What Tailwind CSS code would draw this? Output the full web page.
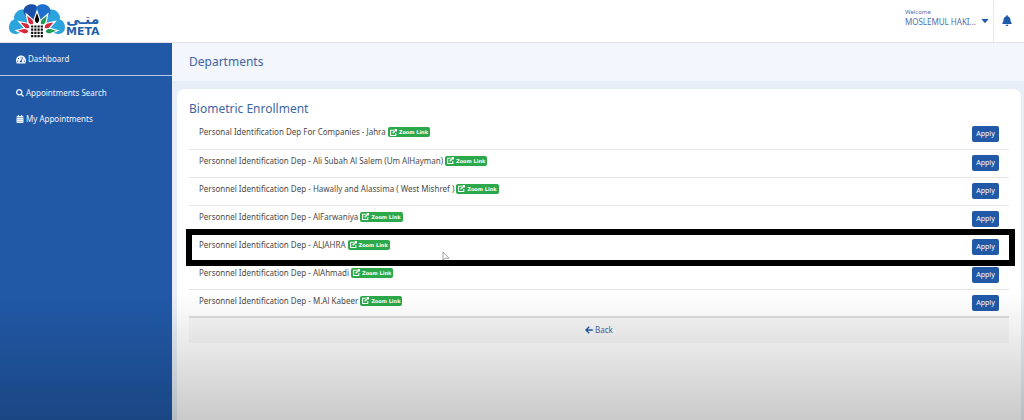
<!DOCTYPE html>
<html lang="en">
<head>
  <meta charset="UTF-8">
  <meta name="viewport" content="width=device-width, initial-scale=1">
  <title>META - Departments</title>
  <!-- Tailwind CSS CDN -->
  <script src="https://cdn.jsdelivr.net/npm/@tailwindcss/browser@4"></script>
</head>
<body class="relative min-h-screen flex flex-col bg-[#e7eef8] font-['Noto_Sans','Open_Sans',sans-serif] text-[8px] leading-3 text-[#4a4a4a]">

  <!-- Shared shapes -->
  <svg class="hidden" aria-hidden="true">
    <symbol id="icon-edit" viewBox="0 0 512 512"><path fill="none" stroke="currentColor" stroke-width="76" d="M280 90H45v380h380V290"/><path fill="currentColor" d="M300 0h212v212l-70-70-210 210-75-75L367 67z"/></symbol>
    <symbol id="petal" viewBox="-8 -30 16 20" overflow="visible"><path fill="currentColor" d="M0-11.500C-3-14-7.200-17-7.400-22-7.300-26.500-4-28.500 0-28.500S7.300-26.500 7.400-22C7.200-17 3-14 0-11.500z"/></symbol>
    <symbol id="drop" viewBox="-4 -20 8 14" overflow="visible"><path fill="currentColor" stroke="#fff" stroke-width="1.200" d="M0-21L2.900-12.500Q2.600-9 0-8-2.600-9-2.900-12.500z"/></symbol>
  </svg>

  <header class="flex h-[43px] shrink-0 items-center border-b border-[#dde2e9] bg-white">
    <a href="#" class="ml-2 flex items-center text-[#1f5fae]" aria-label="META home">
      <svg class="w-[58px] h-9" viewBox="-29 -29 58 36" aria-hidden="true">
        <g class="text-[#2ba3dc]">
          <use href="#petal" x="-8" y="-30" width="16" height="20" transform="rotate(-76)"/>
          <use href="#petal" x="-8" y="-30" width="16" height="20" transform="rotate(-46)"/>
          <use href="#petal" x="-8" y="-30" width="16" height="20" transform="rotate(46)"/>
          <use href="#petal" x="-8" y="-30" width="16" height="20" transform="rotate(76)"/>
        </g>
        <use href="#petal" x="-8" y="-30" width="16" height="20" transform="rotate(-16)" class="text-[#1c4fa8]"/>
        <use href="#petal" x="-8" y="-30" width="16" height="20" transform="rotate(16)" class="text-[#1d6fcb]"/>
        <g class="text-[#d5283c]">
          <use href="#drop" x="-4" y="-20" width="8" height="14" transform="rotate(-86)"/>
          <use href="#drop" x="-4" y="-20" width="8" height="14" transform="rotate(-60)"/>
          <use href="#drop" x="-4" y="-20" width="8" height="14" transform="rotate(-31)"/>
          <use href="#drop" x="-4" y="-20" width="8" height="14" transform="rotate(60)"/>
        </g>
        <g class="text-[#1d9a57]">
          <use href="#drop" x="-4" y="-20" width="8" height="14" transform="rotate(31)"/>
          <use href="#drop" x="-4" y="-20" width="8" height="14" transform="rotate(86)"/>
        </g>
        <use href="#drop" x="-4" y="-20" width="8" height="14" class="text-black"/>
        <path fill="#fff" d="M-6.500-7.500h13V6h-13z"/>
        <path fill="none" stroke="#111" stroke-width="2.200" stroke-dasharray="2.200 1" d="M-5.900-5.500H6.100M-5.900-2.300H6.100M-5.900.9H6.100M-5.900 4.100H6.100"/>
      </svg>
      <span class="flex flex-col pt-2 font-['DejaVu_Sans',sans-serif] font-bold">
        <span lang="ar" dir="rtl" class="text-center text-[14px] leading-[14px]">متـى</span>
        <span class="text-[11px] leading-3">META</span>
      </span>
    </a>
    <div class="ml-auto flex h-full items-center">
      <button type="button" class="flex items-center gap-[5px] pr-1 pb-1.5 text-left text-[#4a6fae]">
        <span><span class="block text-[6px] leading-2">Welcome</span><span class="block">MOSLEMUL HAKI...</span></span>
        <svg class="mt-1.5 h-2 w-2" viewBox="0 0 8 8" aria-hidden="true"><path fill="#1f5aa8" d="M1 2h6q.6 0 .2.500L4.400 5.700q-.4.400-.8 0L.8 2.500Q.4 2 1 2z"/></svg>
      </button>
      <button type="button" class="flex h-full w-[31px] items-center justify-center border-l border-[#e6e9ee] pr-1 pb-0.5 text-[#1f5aa8]" aria-label="Notifications">
        <svg class="h-[11px] w-[10px]" viewBox="0 0 448 512" aria-hidden="true"><path fill="currentColor" d="M224 512c35.300 0 63.900-28.700 63.900-64H160.100c0 35.300 28.600 64 63.900 64zm215.400-149.700c-19.300-20.800-55.500-52-55.500-154.300 0-77.700-54.500-139.900-127.900-155.200V32c0-17.700-14.300-32-32-32s-32 14.300-32 32v20.800C118.600 68.100 64.100 130.300 64.100 208c0 102.300-36.200 133.500-55.500 154.300-6 6.400-8.700 14.100-8.600 21.700.1 16.400 13 32 32.100 32h383.800c19.100 0 32-15.600 32.100-32 .1-7.600-2.600-15.300-8.600-21.700z"/></svg>
      </button>
    </div>
  </header>

  <div class="flex grow">
    <nav class="w-[172px] shrink-0 bg-[#2159a7] text-[#f0f5fc]">
      <a href="#" class="flex h-[33px] items-center gap-[2px] border-b border-[#b5cbea] pl-4">
        <svg class="h-[9px] w-[10px]" viewBox="0 0 576 512" aria-hidden="true"><path fill="currentColor" fill-rule="evenodd" d="M288 32C129 32 0 161 0 320c0 53 14 102 39 145 6 9 16 15 27 15h444c11 0 21-6 27-15 25-43 39-92 39-145C576 161 447 32 288 32zm0 64a32 32 0 1 1 0 64 32 32 0 1 1 0-64zM96 384a32 32 0 1 1 0-64 32 32 0 1 1 0 64zm48-160a32 32 0 1 1 0-64 32 32 0 1 1 0 64zm202 192H230c-4-10-6-20-6-32 0-34 26-62 60-64l66-170c5-12 18-19 31-14 12 5 19 18 14 31l-66 170c15 12 23 29 23 47 0 12-2 22-6 32zm134-32a32 32 0 1 1 0-64 32 32 0 1 1 0 64z"/></svg>
        Dashboard
      </a>
      <a href="#" class="mt-1 flex h-[26px] items-center gap-[2px] pl-4">
        <svg class="h-2 w-2" viewBox="0 0 512 512" aria-hidden="true"><path fill="none" stroke="currentColor" stroke-width="84" d="M208 42a166 166 0 1 0 0 332 166 166 0 1 0 0-332zM325 325L480 480"/></svg>
        Appointments Search
      </a>
      <a href="#" class="flex h-[26px] items-center gap-[2px] pl-4">
        <svg class="h-2 w-2" viewBox="0 0 448 512" aria-hidden="true"><path fill="currentColor" fill-rule="evenodd" d="M0 464c0 26 22 48 48 48h352c26 0 48-22 48-48V192H0zM72 268h48v48H72zm128 0h48v48h-48zm128 0h48v48h-48zM72 396h48v48H72zm128 0h48v48h-48zm128 0h48v48h-48zM400 64h-48V0h-64v64H160V0H96v64H48C22 64 0 86 0 112v48h448v-48c0-26-22-48-48-48z"/></svg>
        My Appointments
      </a>
    </nav>

    <main class="flex grow flex-col">
      <h1 class="bg-[#f3f6fc] px-[17px] py-2 text-[12px] leading-[22px] text-[#3f65a3]">Departments</h1>

      <section class="mt-2 mr-[3px] ml-[5px] grow rounded-t-lg bg-white px-3 pt-3">
        <h2 class="text-[12px] leading-4 text-[#3f65a3]">Biometric Enrollment</h2>

        <table class="mt-1 w-full">
          <tbody id="departments"></tbody>
          <tfoot>
            <tr class="border-t-2 border-[#dedcde] bg-black/3">
              <td colspan="2" class="h-[26px] text-center">
                <a href="#" class="inline-flex items-center gap-[2px] text-[#3f65a3]">
                  <svg class="h-2 w-2" viewBox="0 0 8 8" aria-hidden="true"><path fill="none" stroke="#2159a7" stroke-width="1.400" d="M4.200.8L1 4l3.200 3.200M1 4h6.800"/></svg>
                  Back
                </a>
              </td>
            </tr>
          </tfoot>
        </table>
      </section>
    </main>
  </div>

  <!-- Bottom shade -->
  <div class="pointer-events-none absolute inset-x-0 bottom-0 h-32 bg-linear-to-b from-transparent to-black/21"></div>

  <!-- Row template -->
  <template id="row-template">
    <tr class="relative h-7 border-b border-[#e6e6e8] align-top last:border-b-0">
      <td class="pt-[5px] pl-[10px]">
        <div class="flex items-center gap-[2px]">
          <span class="name"></span>
          <a href="#" class="flex h-[10px] items-center gap-[2px] rounded-xs bg-[#2ba84a] px-[2px] font-['DejaVu_Sans',sans-serif] text-[5px] font-bold text-white">
            <svg class="h-[7px] w-[7px]" aria-hidden="true"><use href="#icon-edit"/></svg>
            Zoom Link
          </a>
        </div>
      </td>
      <td class="w-[37px] pt-[5px] pr-[10px]">
        <button type="button" class="block h-4 w-[27px] rounded-xs bg-[#2159a7] text-[7px] text-white hover:bg-[#1a4a8d]">Apply</button>
      </td>
    </tr>
  </template>

  <!-- Frame and pointer drawn over the selected row -->
  <template id="highlight-template">
    <div class="pointer-events-none absolute -top-1 -right-1.5 -bottom-1.5 -left-[3px] border-6 border-black"></div>
    <svg class="pointer-events-none absolute top-[18px] left-[253px] h-[11px] w-[8px]" viewBox="0 0 8 11" aria-hidden="true"><path fill="#fff" stroke="#8a8a8a" stroke-width=".8" d="M1 1v8l2-1.700h4z"/></svg>
  </template>

  <!-- JavaScript -->
  <script>
    const departments = [
      'Personal Identification Dep For Companies - Jahra',
      'Personnel Identification Dep - Ali Subah Al Salem (Um AlHayman)',
      'Personnel Identification Dep - Hawally and Alassima ( West Mishref )',
      'Personnel Identification Dep - AlFarwaniya',
      'Personnel Identification Dep - ALJAHRA',
      'Personnel Identification Dep - AlAhmadi',
      'Personnel Identification Dep - M.Al Kabeer'
    ];
    const selected = 4;

    const tbody = document.getElementById('departments');
    const rowTemplate = document.getElementById('row-template');
    const highlightTemplate = document.getElementById('highlight-template');

    departments.forEach((name, index) => {
      const row = rowTemplate.content.cloneNode(true);
      row.querySelector('.name').textContent = name;
      if (index === selected) {
        row.querySelector('td').append(highlightTemplate.content.cloneNode(true));
      }
      tbody.append(row);
    });
  </script>
</body>
</html>
